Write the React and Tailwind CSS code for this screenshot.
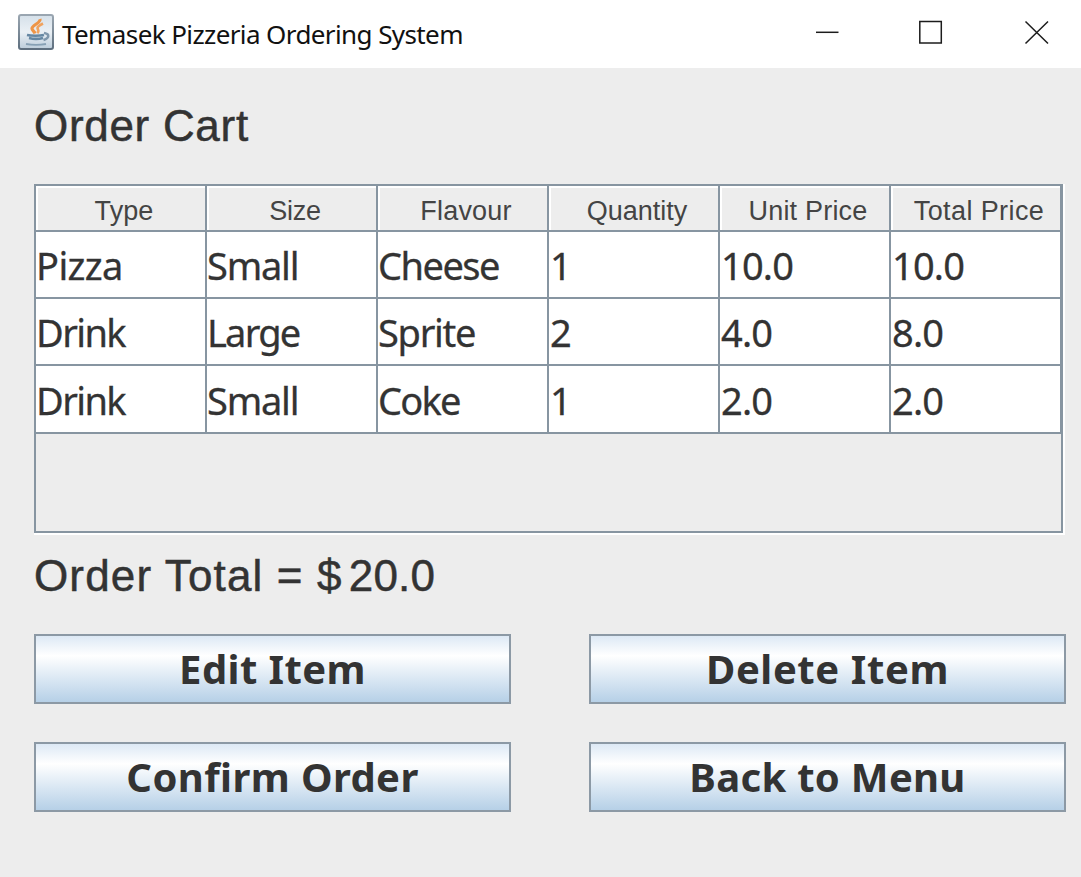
const columns = [
  { label: "Type", tracking: "tracking-[0.1px]" },
  { label: "Size", tracking: "tracking-[-0.2px]" },
  { label: "Flavour", tracking: "tracking-[0.2px]" },
  { label: "Quantity", tracking: "tracking-[0px]" },
  { label: "Unit Price", tracking: "tracking-[0.2px]" },
  { label: "Total Price", tracking: "tracking-[0.4px]" },
];

const rows = [
  ["Pizza", "Small", "Cheese", "1", "10.0", "10.0"],
  ["Drink", "Large", "Sprite", "2", "4.0", "8.0"],
  ["Drink", "Small", "Coke", "1", "2.0", "2.0"],
];

const cellTracking = {
  Pizza: "tracking-[-0.6px]",
  Small: "tracking-[-1.2px]",
  Cheese: "tracking-[-1.5px]",
  Drink: "tracking-[-1.6px]",
  Large: "tracking-[-1.8px]",
  Sprite: "tracking-[-1.3px]",
  Coke: "tracking-[-1.8px]",
};

const actions = [
  { label: "Edit Item", tracking: "tracking-[0.4px]" },
  { label: "Delete Item", tracking: "tracking-[0.6px]" },
  { label: "Confirm Order", tracking: "tracking-[0.4px]" },
  { label: "Back to Menu", tracking: "tracking-[0.3px]" },
];

function JavaIcon() {
  return (
    <svg width="36" height="36" viewBox="0 0 36 36" fill="none">
      <defs>
        <linearGradient id="tile" x1="0" y1="0" x2="0" y2="1">
          <stop offset="0" stopColor="#d5e0e9" />
          <stop offset="0.5" stopColor="#eaf0f5" />
          <stop offset="1" stopColor="#bccddb" />
        </linearGradient>
        <linearGradient id="rim" x1="0" y1="0" x2="0" y2="1">
          <stop offset="0" stopColor="#9aa6b1" />
          <stop offset="1" stopColor="#5e6f7f" />
        </linearGradient>
      </defs>
      <rect x="1" y="1" width="34" height="34" rx="2" fill="url(#tile)" stroke="url(#rim)" strokeWidth="2" />
      <path d="M22 5c1 4-8 6-8 9.500 0 2 2.500 3 3 5" stroke="#ee9547" strokeWidth="3.200" />
      <path d="M25 9.500c-4 2-6.500 3.500-5 6 .8 1.500.3 2.500-.8 3.500" stroke="#f0a35f" strokeWidth="2.600" />
      <path d="M9 21c4 1 13 1 17 0M11 24c4 1 10 1 14 0" stroke="#6587a3" strokeWidth="2.600" />
      <path d="M26 19c6 1 5.500 5-.5 7" stroke="#7f97ac" strokeWidth="2.500" />
      <path d="M8 30c5 1 15 1 20 0" stroke="#86a0b4" strokeWidth="2.200" />
    </svg>
  );
}

function TitleBar() {
  return (
    <header className="flex h-[68px] items-start bg-white pl-[18px]">
      <div className="mt-[14px]">
        <JavaIcon />
      </div>
      <h1 className="mt-[14px] ml-2 flex-1 text-[26px] leading-10 tracking-[-0.6px] whitespace-nowrap text-[#111] font-['Noto_Sans',sans-serif]">
        Temasek Pizzeria Ordering System
      </h1>
      <svg className="mr-[31px] mt-5" width="235" height="25" viewBox="0 0 235 25" fill="none" stroke="#1c1c1c" strokeWidth="1.500">
        <path d="M1 12.300h22.500" />
        <rect x="104.800" y="1.500" width="21.500" height="21.500" />
        <path d="M210.500 1.500l22.500 22M233 1.500l-22.500 22" />
      </svg>
    </header>
  );
}

function CartTable() {
  return (
    <section className="flex h-[351px] w-[1031px] border-r-2 border-b-2 border-white">
      <div className="flex-1 border-2 border-[#8795a1]">
        <div className="flex h-[44px] bg-[#ededed]">
          {columns.map((c) => (
            <div key={c.label} className="flex w-[171px] shrink-0 border-r-2 border-[#8795a1] nth-6:w-[169px] nth-6:border-r-0">
              <div className="flex flex-1 justify-center border-t-2 border-l-2 border-white pt-[4px] pl-[5px]">
                <span className={`text-[27px] leading-[38px] whitespace-nowrap text-[#444] font-['Liberation_Sans',sans-serif] ${c.tracking}`}>{c.label}</span>
              </div>
            </div>
          ))}
          <div className="flex-1 bg-[#8795a1]" />
        </div>
        <div className="border-t-2 border-[#8795a1]">
          {rows.map((r, i) => (
            <div key={i} className="group flex h-[67px] border-b-2 border-[#8795a1] bg-white last:h-[68px]">
              {r.map((v, j) => (
                <div key={j} className="w-[171px] shrink-0 border-r-2 border-[#8795a1] pt-[8px] group-last:pt-[9px] nth-6:w-[169px] nth-6:border-r-0">
                  <span className={`block text-[38px] leading-[50px] whitespace-nowrap text-[#333] [-webkit-text-stroke:0.3px_#333] font-['Noto_Sans',sans-serif] ${cellTracking[v] || "pl-px tracking-[-0.8px]"}`}>{v}</span>
                </div>
              ))}
              <div className="flex-1 bg-[#8795a1]" />
            </div>
          ))}
        </div>
      </div>
    </section>
  );
}

export default function App() {
  return (
    <div className="flex h-[877px] w-[1081px] flex-col overflow-hidden bg-[#ededed] text-[#333]">
      <TitleBar />
      <main className="pl-[34px]">
        <h2 className="mt-[32px] h-[84px] text-[44px] leading-[52px] tracking-[0.7px] whitespace-nowrap [-webkit-text-stroke:0.5px_#333] font-['Liberation_Sans',sans-serif]">Order Cart</h2>
        <CartTable />
        <p className="mt-[15px] flex h-[84px] text-[44px] leading-[52px] whitespace-nowrap [-webkit-text-stroke:0.5px_#333] font-['Liberation_Sans',sans-serif]">
          <span className="tracking-[1.15px]">Order Total = $</span>
          <span className="ml-[6px] tracking-[0.2px]">20.0</span>
        </p>
        <div className="grid grid-cols-[477px_477px] gap-x-[78px] gap-y-[38px]">
          {actions.map((a) => (
            <button key={a.label} className={`flex h-[70px] items-center justify-center border-2 border-[#8c99a5] bg-linear-to-b from-[#dde9f5] via-white via-30% to-[#b6d0e7] text-[40px] font-bold whitespace-nowrap font-['Noto_Sans',sans-serif] ${a.tracking}`}>
              {a.label}
            </button>
          ))}
        </div>
      </main>
    </div>
  );
}
